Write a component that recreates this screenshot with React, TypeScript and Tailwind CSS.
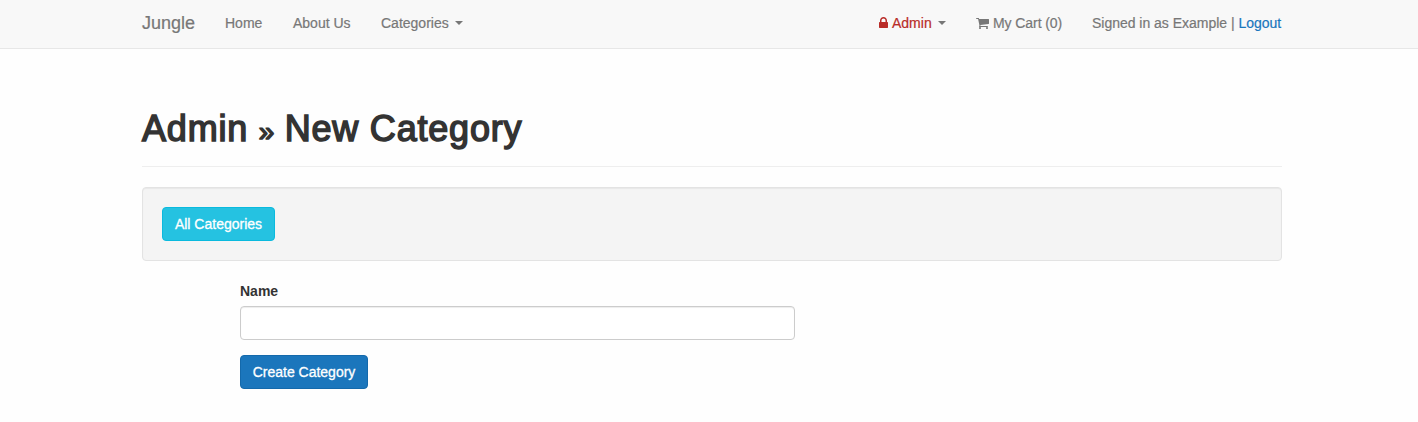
import React from "react";

function Caret() {
  return (
    <span className="ml-[6px] inline-block h-0 w-0 border-x-4 border-t-4 border-x-transparent border-t-[#777] align-middle" />
  );
}

function LockIcon() {
  return (
    <svg viewBox="320 0 1152 1792" className="mr-1 h-[14px] w-[9px] fill-current" aria-hidden="true">
      <path d="M640 768h512v-192q0-106-75-181t-181-75-181 75-75 181v192zm832 96v576q0 40-28 68t-68 28h-960q-40 0-68-28t-28-68v-576q0-40 28-68t68-28h32v-192q0-184 132-316t316-132 316 132 132 316v192h32q40 0 68 28t28 68z" />
    </svg>
  );
}

function CartIcon() {
  return (
    <svg viewBox="64 0 1664 1792" className="mr-1 h-[14px] w-[13px] fill-current" aria-hidden="true">
      <path d="M704 1536q0 52-38 90t-90 38-90-38-38-90 38-90 90-38 90 38 38 90zm896 0q0 52-38 90t-90 38-90-38-38-90 38-90 90-38 90 38 38 90zm128-1088v512q0 24-16.5 42.5t-40.5 21.5l-1044 122q13 60 13 70 0 16-24 64h920q26 0 45 19t19 45-19 45-45 19h-1024q-26 0-45-19t-19-45q0-11 8-31.5t16-36 21.5-40 15.5-29.5l-177-823h-204q-26 0-45-19t-19-45 19-45 45-19h256q16 0 28.5 6.5t19.5 15.5 13 24.5 8 26 5.5 29.5 4.5 26h1201q26 0 45 19t19 45z" />
    </svg>
  );
}

export default function App() {
  return (
    <div className="h-[422px] w-full overflow-hidden bg-[#fefefe] font-['Liberation_Sans',Arial,sans-serif] text-sm leading-5 text-[#333]">
      <nav className="h-[49px] border-b border-[#e7e7e7] bg-[#f8f8f8] pl-[142px] text-[#777] [-webkit-text-stroke:0.2px]">
        <div className="flex h-12 w-[1140px] items-center justify-between pb-[2px]">
          <div className="flex items-center whitespace-nowrap">
            <a href="#" className="w-[83px] text-lg leading-5">Jungle</a>
            <a href="#" className="w-[68px]">Home</a>
            <a href="#" className="w-[88px]">About Us</a>
            <a href="#" className="flex items-center">Categories<Caret /></a>
          </div>
          <div className="flex items-center whitespace-nowrap">
            <a href="#" className="flex w-[97px] items-center text-[#b92c28]">
              <LockIcon />Admin<Caret />
            </a>
            <a href="#" className="flex w-[116px] items-center tracking-[-0.08px]">
              <CartIcon />My Cart (0)
            </a>
            <p className="w-[190px] tracking-[-0.02px]">
              Signed in as Example | <a href="#" className="text-[#1a76bd]">Logout</a>
            </p>
          </div>
        </div>
      </nav>

      <main className="ml-[142px] w-[1140px] pt-[60px]">
        <header className="mb-5 h-[58px] border-b border-[#eee]">
          <h1 className="text-4xl leading-10 font-normal tracking-[0.8px] [-webkit-text-stroke:1.5px]">
            Admin <span className="text-[28px] leading-none tracking-[-0.6px]">»</span> New Category
          </h1>
        </header>

        <div className="mb-5 h-[74px] rounded border border-[#e3e3e3] bg-[#f4f4f4] p-[19px] shadow-[inset_0_1px_1px_rgba(0,0,0,0.05)]">
          <a
            href="#"
            className="inline-flex h-[34px] w-[113px] items-center justify-center rounded border border-[#0abade] bg-[#25c2e1] whitespace-nowrap text-white [-webkit-text-stroke:0.3px]"
          >
            All Categories
          </a>
        </div>

        <form className="ml-[98px] flex w-[555px] flex-col items-start">
          <label htmlFor="name" className="mb-[5px] font-bold">Name</label>
          <input
            id="name"
            type="text"
            className="mb-[15px] h-[34px] w-full rounded border border-[#ccc] bg-white px-3 shadow-[inset_0_1px_1px_rgba(0,0,0,0.075)] outline-none"
          />
          <button
            type="button"
            className="h-[34px] w-32 rounded border border-[#1469ab] bg-[#1b76bc] whitespace-nowrap text-white [-webkit-text-stroke:0.3px]"
          >
            Create Category
          </button>
        </form>
      </main>
    </div>
  );
}
